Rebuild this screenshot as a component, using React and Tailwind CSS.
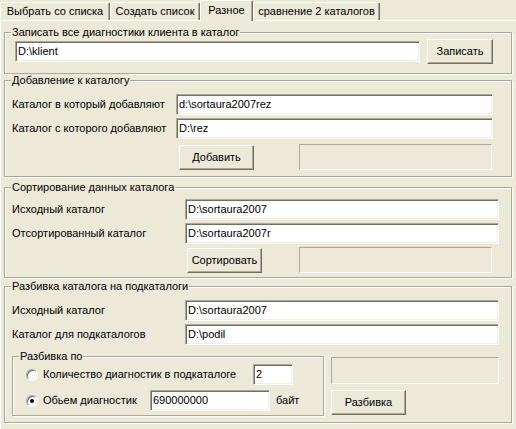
import React from "react";

// classic Win32 form look: tab control, etched group boxes, sunken edits

const edit3d =
  "h-[21px] bg-white border border-t-[#ACA899] border-l-[#ACA899] border-b-white border-r-white shadow-[inset_1px_1px_0_#716F64,inset_-1px_-1px_0_#F1EFE2] pl-[2px] flex items-center whitespace-nowrap overflow-hidden leading-[13px]";

function Edit({ w, value }) {
  return <div className={`${edit3d} ${w}`}>{value}</div>;
}

function Btn({ w, children, className = "" }) {
  return (
    <div
      className={`${w} h-[25px] shrink-0 flex items-center justify-center border border-t-white border-l-white border-b-[#716F64] border-r-[#716F64] shadow-[inset_-1px_-1px_0_#ACA899] leading-[13px] ${className}`}
    >
      {children}
    </div>
  );
}

function Blank({ w, h, className = "" }) {
  return (
    <div
      className={`${w} ${h} shrink-0 border border-t-[#ACA899] border-l-[#ACA899] border-b-white border-r-white ${className}`}
    />
  );
}

function Group({ title, className = "", children }) {
  return (
    <div className={`relative border border-[#ACA899] shadow-[inset_1px_1px_0_#fff,1px_1px_0_#fff] ${className}`}>
      <span className="absolute -top-[7px] left-[6px] bg-[#ECE9D8] px-[1px] leading-[13px] whitespace-nowrap">
        {title}
      </span>
      {children}
    </div>
  );
}

function Row({ label, lw, ew, value, className = "" }) {
  return (
    <div className={`flex items-center ${className}`}>
      <span className={`${lw} shrink-0 leading-[13px] whitespace-nowrap`}>{label}</span>
      <Edit w={ew} value={value} />
    </div>
  );
}

function Radio({ checked }) {
  return (
    <div className="w-[12px] h-[12px] shrink-0 rounded-full bg-white border border-t-[#ACA899] border-l-[#ACA899] border-b-white border-r-white shadow-[inset_1px_1px_0_#716F64,inset_-1px_-1px_0_#F1EFE2] flex items-center justify-center">
      {checked && <div className="w-[4px] h-[4px] rounded-full bg-black" />}
    </div>
  );
}

function Tab({ w, label, active }) {
  if (active) {
    return (
      <div
        className={`${w} h-[21px] -mb-[1px] relative z-10 bg-[#ECE9D8] flex items-start justify-center pt-[3px] border-t border-l border-white border-r border-r-[#716F64] shadow-[inset_-1px_0_0_#ACA899] rounded-t-[2px] leading-[13px]`}
      >
        {label}
      </div>
    );
  }
  return (
    <div
      className={`${w} h-[18px] flex items-center justify-center border-t border-l border-white border-r border-r-[#716F64] shadow-[inset_-1px_0_0_#ACA899] rounded-t-[2px] leading-[13px] whitespace-nowrap`}
    >
      {label}
    </div>
  );
}

export default function App() {
  return (
    <div className="w-[516px] h-[429px] overflow-hidden bg-[#ECE9D8] text-black text-[11px] font-['Liberation_Sans',Arial,sans-serif]">
      {/* Tabs */}
      <div className="flex items-end h-[20px]">
        <Tab w="w-[110px]" label="Выбрать со списка" />
        <Tab w="w-[90px]" label="Создать список" />
        <Tab w="w-[53px]" label="Разное" active />
        <Tab w="w-[127px]" label="сравнение 2 каталогов" />
      </div>

      {/* Tab page */}
      <div className="h-[409px] border-t border-l border-white pl-[3px] pt-[11px]">
        <Group title="Записать все диагностики клиента в каталог" className="w-[508px] h-[42px]">
          <div className="flex items-center gap-[7px] pl-[10px] pt-[6px] h-[31px]">
            <Edit w="w-[405px]" value="D:\klient" />
            <Btn w="w-[66px]">Записать</Btn>
          </div>
        </Group>

        <Group title="Добавление к каталогу" className="w-[508px] h-[97px] mt-[6px]">
          <div className="pl-[7px] pt-[13px]">
            <Row label="Каталог в который добавляют" lw="w-[164px]" ew="w-[317px]" value="d:\sortaura2007rez" />
            <Row label="Каталог с которого добавляют" lw="w-[164px]" ew="w-[317px]" value="D:\rez" className="mt-[3px]" />
            <div className="flex items-center h-[26px] mt-[5px]">
              <Btn w="w-[75px]" className="ml-[167px]">Добавить</Btn>
              <Blank w="w-[193px]" h="h-[26px]" className="ml-[45px]" />
            </div>
          </div>
        </Group>

        <Group title="Сортирование данных каталога" className="w-[508px] h-[91px] mt-[10px]">
          <div className="pl-[7px] pt-[11px]">
            <Row label="Исходный каталог" lw="w-[173px]" ew="w-[314px]" value="D:\sortaura2007" />
            <Row label="Отсортированный каталог" lw="w-[173px]" ew="w-[314px]" value="D:\sortaura2007r" className="mt-[3px]" />
            <div className="flex items-center h-[26px] mt-[3px]">
              <Btn w="w-[75px]" className="ml-[175px]">Сортировать</Btn>
              <Blank w="w-[193px]" h="h-[26px]" className="ml-[37px]" />
            </div>
          </div>
        </Group>

        <Group title="Разбивка каталога на подкаталоги" className="w-[508px] h-[137px] mt-[8px]">
          <div className="pl-[7px] pt-[13px]">
            <Row label="Исходный каталог" lw="w-[173px]" ew="w-[314px]" value="D:\sortaura2007" />
            <Row label="Каталог для подкаталогов" lw="w-[173px]" ew="w-[314px]" value="D:\podil" className="mt-[3px]" />
            <div className="flex items-start mt-[11px]">
              <Group title="Разбивка по" className="w-[312px] h-[60px]">
                <div className="pl-[13px] pt-[7px]">
                  <div className="flex items-center h-[21px]">
                    <Radio />
                    <span className="ml-[5px] w-[210px] shrink-0 leading-[13px] whitespace-nowrap">
                      Количество диагностик в подкаталоге
                    </span>
                    <Edit w="w-[40px]" value="2" />
                  </div>
                  <div className="flex items-center h-[21px] mt-[5px]">
                    <Radio checked />
                    <span className="ml-[5px] w-[107px] shrink-0 leading-[13px] whitespace-nowrap">Обьем диагностик</span>
                    <Edit w="w-[120px]" value="690000000" />
                    <span className="ml-[6px] leading-[13px]">байт</span>
                  </div>
                </div>
              </Group>
              <div className="flex flex-col ml-[7px]">
                <Blank w="w-[168px]" h="h-[27px]" className="mt-[1px]" />
                <Btn w="w-[75px]" className="mt-[6px]">Разбивка</Btn>
              </div>
            </div>
          </div>
        </Group>
      </div>
    </div>
  );
}
